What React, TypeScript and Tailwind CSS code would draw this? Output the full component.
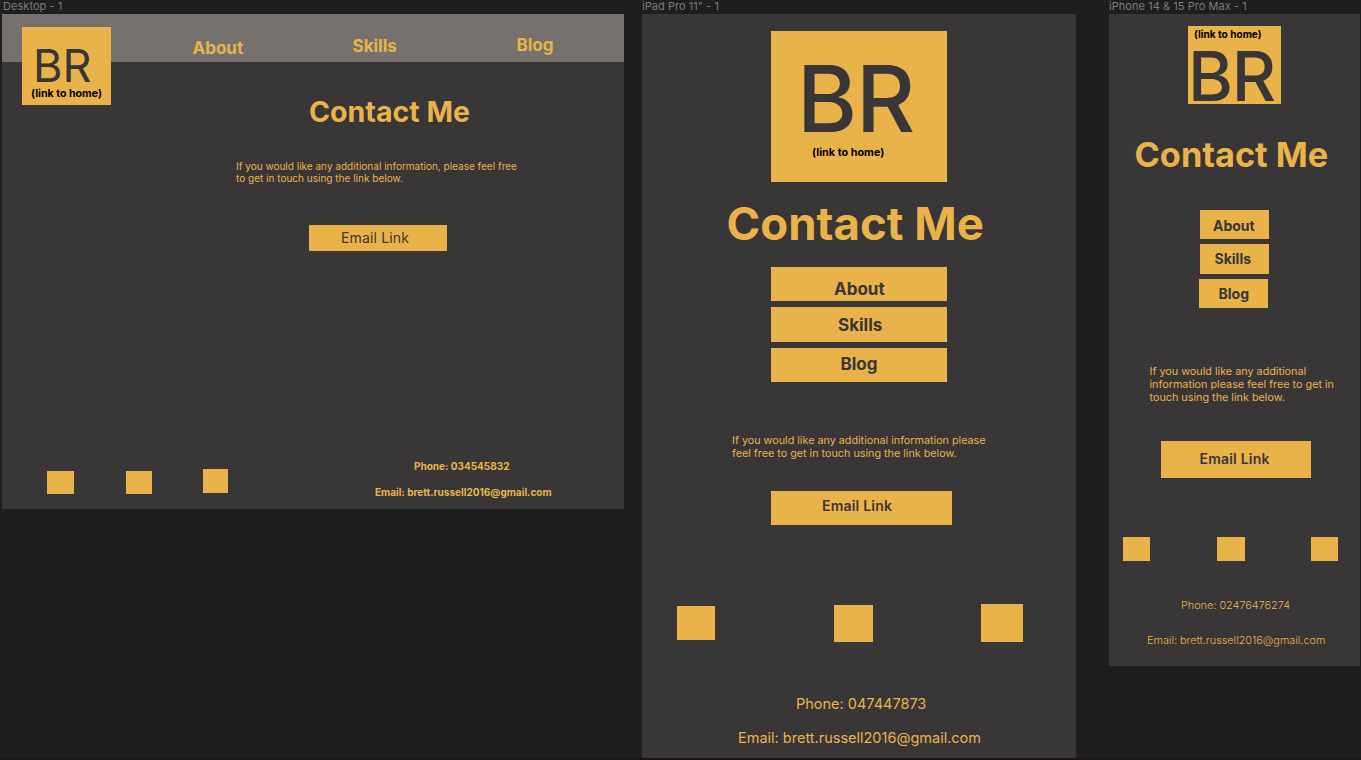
import type { ReactNode } from "react";

function Artboard({ label, className, labelClass = "", children }: { label: string; className: string; labelClass?: string; children: ReactNode }) {
  return (
    <section className="flex flex-col">
      <div className={`h-[14px] text-[11px] leading-[13px] tracking-[0.05px] whitespace-nowrap text-[#7b7b7b] ${labelClass}`}>{label}</div>
      <div className={`flex flex-col bg-[#393637] text-[#e9b34a] ${className}`}>{children}</div>
    </section>
  );
}

function Square({ className }: { className: string }) {
  return <a className={`block bg-[#e9b34a] ${className}`} />;
}

function NavButton({ className, children }: { className: string; children: ReactNode }) {
  return <a className={`block bg-[#e9b34a] font-bold text-[#393637] ${className}`}>{children}</a>;
}

function DesktopBoard() {
  return (
    <Artboard label="Desktop - 1" labelClass="pl-px" className="relative h-[495px] w-[622px]">
      <header className="grid h-12 grid-cols-[160px_163px_1fr] items-start bg-[#75716d] pl-[190.5px] text-[17px] leading-5 font-bold">
        <a className="mt-6">About</a>
        <a className="mt-[22px]">Skills</a>
        <a className="mt-[21px] pl-px">Blog</a>
      </header>
      <a className="absolute top-[13px] left-5 flex h-[78px] w-[89px] flex-col bg-[#e9b34a]">
        <span className="mt-4 ml-[11px] text-[45px] leading-[46px] text-[#393637]">BR</span>
        <span className="ml-[9px] text-[10.6px] leading-[10px] font-bold whitespace-nowrap text-black">(link to home)</span>
      </a>
      <h1 className="mt-8 ml-[307px] text-[28.5px] leading-9 font-bold whitespace-nowrap">Contact Me</h1>
      <p className="mt-[30px] ml-[234px] text-[10.03px] leading-3 whitespace-nowrap">
        If you would like any additional information, please feel free
        <br />
        to get in touch using the link below.
      </p>
      <a className="mt-[41px] ml-[307px] h-[26px] w-[138px] bg-[#e9b34a] pl-8 text-sm leading-[26px] tracking-[0.15px] text-[#393637]">Email Link</a>
      <footer className="mt-[209px] ml-[45px] flex items-start">
        <Square className="mt-[11px] h-[23px] w-[27px]" />
        <Square className="mt-[11px] ml-[52px] h-[23px] w-[26px]" />
        <Square className="mt-[9px] ml-[51px] h-6 w-[25px]" />
        <div className="ml-[147px] flex flex-col gap-[14px] text-[10px] leading-3 font-bold whitespace-nowrap">
          <span className="pl-[39px]">Phone: 034545832</span>
          <span>Email: brett.russell2016@gmail.com</span>
        </div>
      </footer>
    </Artboard>
  );
}

function TabletBoard() {
  return (
    <Artboard label={'iPad Pro 11" - 1'} className="h-[744px] w-[434px]">
      <a className="mt-[17px] ml-[129px] flex h-[151px] w-44 flex-col bg-[#e9b34a]">
        <span className="mt-[22px] ml-[26px] text-[91.5px] leading-[92px] font-medium tracking-[-1.2px] text-[#393637]">BR</span>
        <span className="ml-[41px] text-[10.8px] leading-[15px] font-bold text-black">(link to home)</span>
      </a>
      <h1 className="mt-[14px] ml-[84.5px] text-[45.6px] leading-[56px] font-bold whitespace-nowrap">Contact Me</h1>
      <nav className="mt-[15px] ml-[129px] flex w-44 flex-col gap-1.5 text-[17px]">
        <NavButton className="h-[34px] pl-[63px] leading-[45px]">About</NavButton>
        <NavButton className="h-[35px] pl-[67px] leading-[37px]">Skills</NavButton>
        <NavButton className="h-[34px] pl-[69.5px] leading-[33px]">Blog</NavButton>
      </nav>
      <p className="mt-[52px] ml-[90px] text-[10.77px] leading-[13px] whitespace-nowrap">
        If you would like any additional information please
        <br />
        feel free to get in touch using the link below.
      </p>
      <a className="mt-[31px] ml-[129px] h-[34px] w-[181px] bg-[#e9b34a] pl-[51px] text-sm leading-[30px] font-semibold tracking-[0.2px] text-[#393637]">Email Link</a>
      <div className="mt-[79px] ml-[35px] flex h-[38px] items-start">
        <Square className="mt-0.5 h-[34px] w-[38px]" />
        <Square className="mt-px ml-[119px] h-[37px] w-[39px]" />
        <Square className="ml-[108px] h-[38px] w-[42px]" />
      </div>
      <footer className="mt-[53px] ml-[96px] flex flex-col gap-4 text-[14.5px] leading-[18px] whitespace-nowrap">
        <span className="pl-[58px]">Phone: 047447873</span>
        <span>Email: brett.russell2016@gmail.com</span>
      </footer>
    </Artboard>
  );
}

function PhoneBoard() {
  return (
    <Artboard label="iPhone 14 & 15 Pro Max - 1" className="h-[652px] w-[251px]">
      <a className="mt-3 ml-[79px] flex h-[78px] w-[93px] flex-col bg-[#e9b34a]">
        <span className="mt-px ml-1.5 text-[10.1px] leading-[14px] font-bold whitespace-nowrap text-black">(link to home)</span>
        <span className="mt-px text-[68.5px] leading-[70px] font-medium tracking-[-1.2px] text-[#393637]">BR</span>
      </a>
      <h1 className="mt-[29px] ml-[25.5px] text-[34.3px] leading-[43px] font-bold whitespace-nowrap">Contact Me</h1>
      <nav className="mt-[34px] ml-[91px] flex w-[69px] flex-col gap-[5px] text-sm">
        <NavButton className="h-[29px] pl-[13px] leading-[31px]">About</NavButton>
        <NavButton className="h-[30px] pl-[14.5px] leading-[30px]">Skills</NavButton>
        <NavButton className="-ml-px h-[29px] w-[69px] pl-[19.5px] leading-[30px]">Blog</NavButton>
      </nav>
      <p className="mt-[57px] ml-[40.5px] text-[10.8px] leading-[13px] whitespace-nowrap">
        If you would like any additional
        <br />
        information please feel free to get in
        <br />
        touch using the link below.
      </p>
      <a className="mt-[37px] ml-[52px] h-[37px] w-[150px] bg-[#e9b34a] pl-[38.5px] text-sm leading-9 font-semibold tracking-[0.2px] text-[#393637]">Email Link</a>
      <div className="mt-[59px] ml-[14px] flex">
        <Square className="h-6 w-[27px]" />
        <Square className="ml-[67px] h-6 w-7" />
        <Square className="ml-[66px] h-6 w-[27px]" />
      </div>
      <footer className="mt-[37px] ml-[38px] flex flex-col gap-[21px] text-[10.85px] leading-[14px] font-light whitespace-nowrap">
        <span className="pl-[34px]">Phone: 02476476274</span>
        <span>Email: brett.russell2016@gmail.com</span>
      </footer>
    </Artboard>
  );
}

export default function App() {
  return (
    <main className="flex h-[760px] w-[1361px] items-start overflow-hidden border-b-2 border-[#1b1418] bg-[#1e1e1e] pl-0.5 font-['Inter',sans-serif]">
      <DesktopBoard />
      <div className="ml-[18px]">
        <TabletBoard />
      </div>
      <div className="ml-[33px]">
        <PhoneBoard />
      </div>
    </main>
  );
}
